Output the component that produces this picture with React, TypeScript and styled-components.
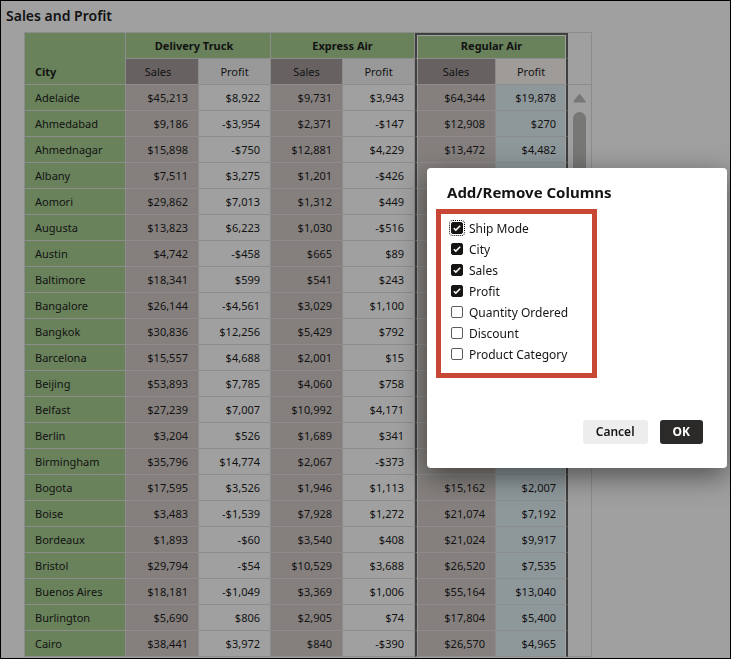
import React, { useState } from "react";
import styled, { createGlobalStyle, css } from "styled-components";

const line = "#8c8c8c";
const pageGrey = "#a0a0a0";
const green = "#69825b";
const selection = "#3f3f3f";

const GlobalStyle = createGlobalStyle`
  *, *::before, *::after { box-sizing: border-box; }
  body {
    margin: 0;
    background: ${pageGrey};
    color: #121212;
    font-family: "Noto Sans", "Open Sans", sans-serif;
    font-size: 11px;
  }
`;

const Page = styled.main`
  height: 100vh;
  overflow: hidden;
  border: 1px solid #000;
  background: ${pageGrey};
`;

const PageTitle = styled.h1`
  margin: 0;
  padding: 4px 5px 5px;
  font-size: 14px;
  line-height: 22px;
  font-weight: 600;
`;

const Grid = styled.table`
  margin-left: 23px;
  width: 568px;
  table-layout: fixed;
  border-collapse: separate;
  border-spacing: 0;
  border-top: 1px solid ${line};
  border-left: 1px solid ${line};
`;

const Column = styled.col<{ $width: number }>`
  width: ${(p) => p.$width}px;
`;

const cell = css`
  height: 26px;
  padding: 0 10px;
  line-height: 16px;
  border-right: 1px solid ${line};
  border-bottom: 1px solid ${line};
`;

const CityHead = styled.th`
  ${cell}
  padding-bottom: 4px;
  background: ${green};
  text-align: left;
  vertical-align: bottom;
`;

const ModeHead = styled.th<{ $selected: boolean; $leading: boolean }>`
  ${cell}
  padding: 0 ${(p) => (p.$leading ? 8 : 0)}px 0 0;
  background: ${green};
  ${(p) =>
    p.$selected &&
    css`
      padding: 0 0 2px;
      border: 2px solid ${selection};
      border-bottom: 1px solid ${line};
      box-shadow: inset 1px 1px 0 #a3a3a3, inset -1px 0 0 #a3a3a3;
    `}
`;

type Measure = "sales" | "profit";

const edge = css<{ $kind: Measure; $selected: boolean }>`
  ${(p) =>
    p.$selected &&
    (p.$kind === "sales"
      ? css`
          border-left: 2px solid ${selection};
          box-shadow: inset 1px 0 0 #999;
        `
      : css`
          border-right: 2px solid ${selection};
          box-shadow: inset -1px 0 0 #a3a3a3;
        `)}
`;

const MeasureHead = styled.th<{ $kind: Measure; $selected: boolean; $leading: boolean }>`
  ${cell}
  padding: 0 ${(p) => (p.$leading ? 8 : 0)}px 0 0;
  font-weight: 400;
  background: ${(p) =>
    p.$kind === "sales" ? "#676261" : p.$selected ? "#9f9b99" : "#999999"};
  ${edge}
`;

const CityCell = styled.th`
  ${cell}
  background: ${green};
  font-weight: 400;
  text-align: left;
`;

const ValueCell = styled.td<{ $kind: Measure; $selected: boolean }>`
  ${cell}
  text-align: right;
  background: ${(p) =>
    p.$kind === "sales" ? "#85807e" : p.$selected ? "#8e989b" : pageGrey};
  ${edge}
`;

const GutterHead = styled.td`
  ${cell}
  padding: 0;
`;

const Gutter = styled.td`
  ${cell}
  padding: 9px 0 0 5px;
  vertical-align: top;
  line-height: 0;
`;

const Thumb = styled.div`
  width: 13px;
  height: 160px;
  margin-top: 9px;
  border-radius: 7px;
  background: #777776;
`;

const Dialog = styled.section`
  position: fixed;
  top: 168px;
  right: 4px;
  width: 300px;
  min-height: 300px;
  padding: 13px 24px 24px 9px;
  display: flex;
  flex-direction: column;
  align-items: flex-start;
  border-radius: 4px;
  background: #fff;
  color: #161513;
  box-shadow: 0 8px 28px rgba(0, 0, 0, 0.5);
`;

const DialogTitle = styled.h2`
  margin: 0 0 6px 11px;
  font-size: 15px;
  line-height: 22px;
  font-weight: 700;
`;

const Options = styled.fieldset`
  width: 161px;
  margin: 0;
  padding: 4px 8px 8px 10px;
  border: 5px solid #c74634;
  display: flex;
  flex-direction: column;
`;

const Option = styled.label`
  display: flex;
  align-items: center;
  gap: 6px;
  height: 21px;
  font-size: 12px;
  line-height: 21px;
  white-space: nowrap;
`;

const BoxWrap = styled.span`
  display: grid;
  flex: none;
  width: 12px;
  height: 21px;
  padding-top: 4px;

  > * {
    grid-area: 1 / 1;
  }

  svg {
    pointer-events: none;
  }
`;

const Box = styled.input`
  appearance: none;
  width: 12px;
  height: 12px;
  margin: 0;
  border: 1px solid #5f5d5b;
  border-radius: 2px;
  background: #fff;

  &:checked {
    border-color: #161513;
    background: #161513;
  }

  &:focus {
    outline: 1px dotted #000;
    outline-offset: 1px;
  }
`;

const Actions = styled.footer`
  display: flex;
  gap: 12px;
  align-self: flex-end;
  margin-top: auto;
`;

const Button = styled.button<{ $primary?: boolean }>`
  height: 24px;
  padding: 0 13px;
  border: 0;
  border-radius: 3px;
  font: ${(p) => (p.$primary ? 700 : 600)} 12px/24px "Noto Sans", "Open Sans", sans-serif;
  color: ${(p) => (p.$primary ? "#fff" : "#161513")};
  background: ${(p) => (p.$primary ? "#2b2a28" : "#ededed")};
`;

const modes = ["Delivery Truck", "Express Air", "Regular Air"];
const selectedMode = 2;
const kinds: Measure[] = ["sales", "profit"];
const widths = [101, 73, 72, 72, 72, 81, 72, 24];

const rows: string[][] = [
  ["Adelaide", "$45,213", "$8,922", "$9,731", "$3,943", "$64,344", "$19,878"],
  ["Ahmedabad", "$9,186", "-$3,954", "$2,371", "-$147", "$12,908", "$270"],
  ["Ahmednagar", "$15,898", "-$750", "$12,881", "$4,229", "$13,472", "$4,482"],
  ["Albany", "$7,511", "$3,275", "$1,201", "-$426", "", ""],
  ["Aomori", "$29,862", "$7,013", "$1,312", "$449", "", ""],
  ["Augusta", "$13,823", "$6,223", "$1,030", "-$516", "", ""],
  ["Austin", "$4,742", "-$458", "$665", "$89", "", ""],
  ["Baltimore", "$18,341", "$599", "$541", "$243", "", ""],
  ["Bangalore", "$26,144", "-$4,561", "$3,029", "$1,100", "", ""],
  ["Bangkok", "$30,836", "$12,256", "$5,429", "$792", "", ""],
  ["Barcelona", "$15,557", "$4,688", "$2,001", "$15", "", ""],
  ["Beijing", "$53,893", "$7,785", "$4,060", "$758", "", ""],
  ["Belfast", "$27,239", "$7,007", "$10,992", "$4,171", "", ""],
  ["Berlin", "$3,204", "$526", "$1,689", "$341", "", ""],
  ["Birmingham", "$35,796", "$14,774", "$2,067", "-$373", "", ""],
  ["Bogota", "$17,595", "$3,526", "$1,946", "$1,113", "$15,162", "$2,007"],
  ["Boise", "$3,483", "-$1,539", "$7,928", "$1,272", "$21,074", "$7,192"],
  ["Bordeaux", "$1,893", "-$60", "$3,540", "$408", "$21,024", "$9,917"],
  ["Bristol", "$29,794", "-$54", "$10,529", "$3,688", "$26,520", "$7,535"],
  ["Buenos Aires", "$18,181", "-$1,049", "$3,369", "$1,006", "$55,164", "$13,040"],
  ["Burlington", "$5,690", "$806", "$2,905", "$74", "$17,804", "$5,400"],
  ["Cairo", "$38,441", "$3,972", "$840", "-$390", "$26,570", "$4,965"],
];

const columnOptions = [
  "Ship Mode",
  "City",
  "Sales",
  "Profit",
  "Quantity Ordered",
  "Discount",
  "Product Category",
];

function SalesGrid() {
  return (
    <Grid>
      <colgroup>
        {widths.map((w, i) => (
          <Column key={i} $width={w} />
        ))}
      </colgroup>
      <thead>
        <tr>
          <CityHead rowSpan={2} scope="col">City</CityHead>
          {modes.map((mode, i) => (
            <ModeHead
              key={mode}
              colSpan={2}
              scope="colgroup"
              $selected={i === selectedMode}
              $leading={i === 0}
            >
              {mode}
            </ModeHead>
          ))}
          <GutterHead rowSpan={2} />
        </tr>
        <tr>
          {modes.map((mode, i) =>
            kinds.map((kind) => (
              <MeasureHead
                key={mode + kind}
                scope="col"
                $kind={kind}
                $selected={i === selectedMode}
                $leading={i === 0 && kind === "sales"}
              >
                {kind === "sales" ? "Sales" : "Profit"}
              </MeasureHead>
            ))
          )}
        </tr>
      </thead>
      <tbody>
        {rows.map(([city, ...values], r) => (
          <tr key={city}>
            <CityCell scope="row">{city}</CityCell>
            {values.map((value, i) => (
              <ValueCell key={i} $kind={kinds[i % 2]} $selected={Math.floor(i / 2) === selectedMode}>
                {value}
              </ValueCell>
            ))}
            {r === 0 && (
              <Gutter rowSpan={rows.length}>
                <svg width="13" height="9" viewBox="0 0 13 9" aria-hidden="true">
                  <path d="M6.5 1.2 11.6 7.6H1.4Z" fill="#777776" stroke="#777776" strokeWidth="2" strokeLinejoin="round" />
                </svg>
                <Thumb />
              </Gutter>
            )}
          </tr>
        ))}
      </tbody>
    </Grid>
  );
}

function ColumnsDialog() {
  const [shown, setShown] = useState(() => new Set(columnOptions.slice(0, 4)));

  const toggle = (name: string) => {
    const next = new Set(shown);
    if (!next.delete(name)) next.add(name);
    setShown(next);
  };

  return (
    <Dialog role="dialog" aria-modal="true" aria-labelledby="columns-title">
      <DialogTitle id="columns-title">Add/Remove Columns</DialogTitle>
      <Options aria-labelledby="columns-title">
        {columnOptions.map((name, i) => (
          <Option key={name}>
            <BoxWrap>
              <Box
                type="checkbox"
                checked={shown.has(name)}
                onChange={() => toggle(name)}
                autoFocus={i === 0}
              />
              {shown.has(name) && (
                <svg width="12" height="12" viewBox="0 0 12 12" fill="none" aria-hidden="true">
                  <path d="M2.8 6.2 4.8 8.1 9.2 3.7" stroke="#fff" strokeWidth="1.5" />
                </svg>
              )}
            </BoxWrap>
            {name}
          </Option>
        ))}
      </Options>
      <Actions>
        <Button type="button">Cancel</Button>
        <Button type="button" $primary>OK</Button>
      </Actions>
    </Dialog>
  );
}

export default function App() {
  return (
    <>
      <GlobalStyle />
      <Page>
        <PageTitle>Sales and Profit</PageTitle>
        <SalesGrid />
      </Page>
      <ColumnsDialog />
    </>
  );
}
